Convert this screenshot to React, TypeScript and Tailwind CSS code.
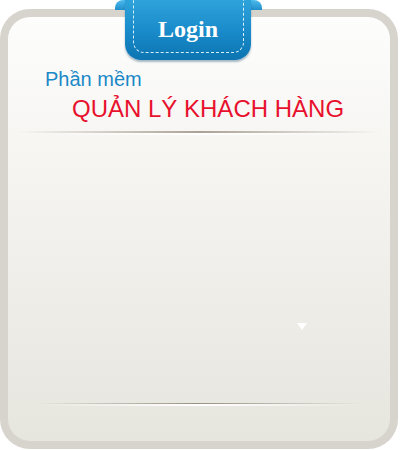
import React from "react";

export default function App() {
  return (
    <div className="relative w-[401px] h-[450px] bg-white overflow-hidden" style={{ fontFamily: '"Liberation Sans", Arial, sans-serif' }}>
      <div className="mt-[9px] w-[398px] h-[440px] rounded-[30px] bg-[#d7d3cd] p-[8px]">
        <div className="h-full rounded-[22px] bg-gradient-to-b from-[#fdfdfc] via-[#f2f1ed] to-[#e6e5de] flex flex-col">
          <div className="pl-[37px] pt-[50px] text-[20px] leading-[24px] text-[#1b88c7]">Phần mềm</div>
          <div className="pl-[64px] pt-[4px] text-[24px] leading-[28px] text-[#e8112d]">QUẢN LÝ KHÁCH HÀNG</div>
          <div className="mt-[8px] mx-[10px] h-[2px] bg-gradient-to-r from-transparent via-[#aba196] to-transparent" />
          <div className="mx-[30px] h-[2px] bg-gradient-to-r from-transparent via-[#ffffff] to-transparent" />
          <div className="flex-1 relative">
            <div className="absolute left-[289px] top-[188px] w-0 h-0 border-l-[5px] border-r-[5px] border-t-[7px] border-l-transparent border-r-transparent border-t-white" />
          </div>
          <div className="mx-[29px] h-[1px] bg-gradient-to-r from-transparent via-[#9a9085] to-transparent" />
          <div className="mx-[29px] h-[2px] bg-gradient-to-r from-transparent via-[#ffffff] to-transparent mb-[35px]" />
        </div>
      </div>
      {/* Login tab */}
      <div className="absolute left-[115px] top-0 w-[147px] h-[62px]">
        <div className="absolute left-0 top-0 w-[14px] h-[10px] rounded-tl-[8px] rounded-tr-[2px] bg-gradient-to-b from-[#4cbcef] to-[#1f8fcb]" />
        <div className="absolute right-0 top-0 w-[14px] h-[10px] rounded-tr-[8px] rounded-tl-[2px] bg-gradient-to-b from-[#4cbcef] to-[#1f8fcb]" />
        <div className="absolute left-[10px] top-0 w-[126px] h-[60px] rounded-b-[16px] bg-gradient-to-b from-[#2ea3db] via-[#1a8ccb] to-[#0c74b1] shadow-[0_2px_2px_rgba(0,60,100,0.35)]">
          <div className="absolute left-[8px] right-[7px] top-[-2px] bottom-[7px] rounded-b-[11px] border-[1px] border-t-0 border-dashed border-[#d9f0fb]" />
          <div className="absolute inset-0 flex items-center justify-center pb-[3px] text-white font-bold text-[24px]" style={{ fontFamily: '"Liberation Serif", "Times New Roman", serif' }}>Login</div>
        </div>
      </div>
    </div>
  );
}
